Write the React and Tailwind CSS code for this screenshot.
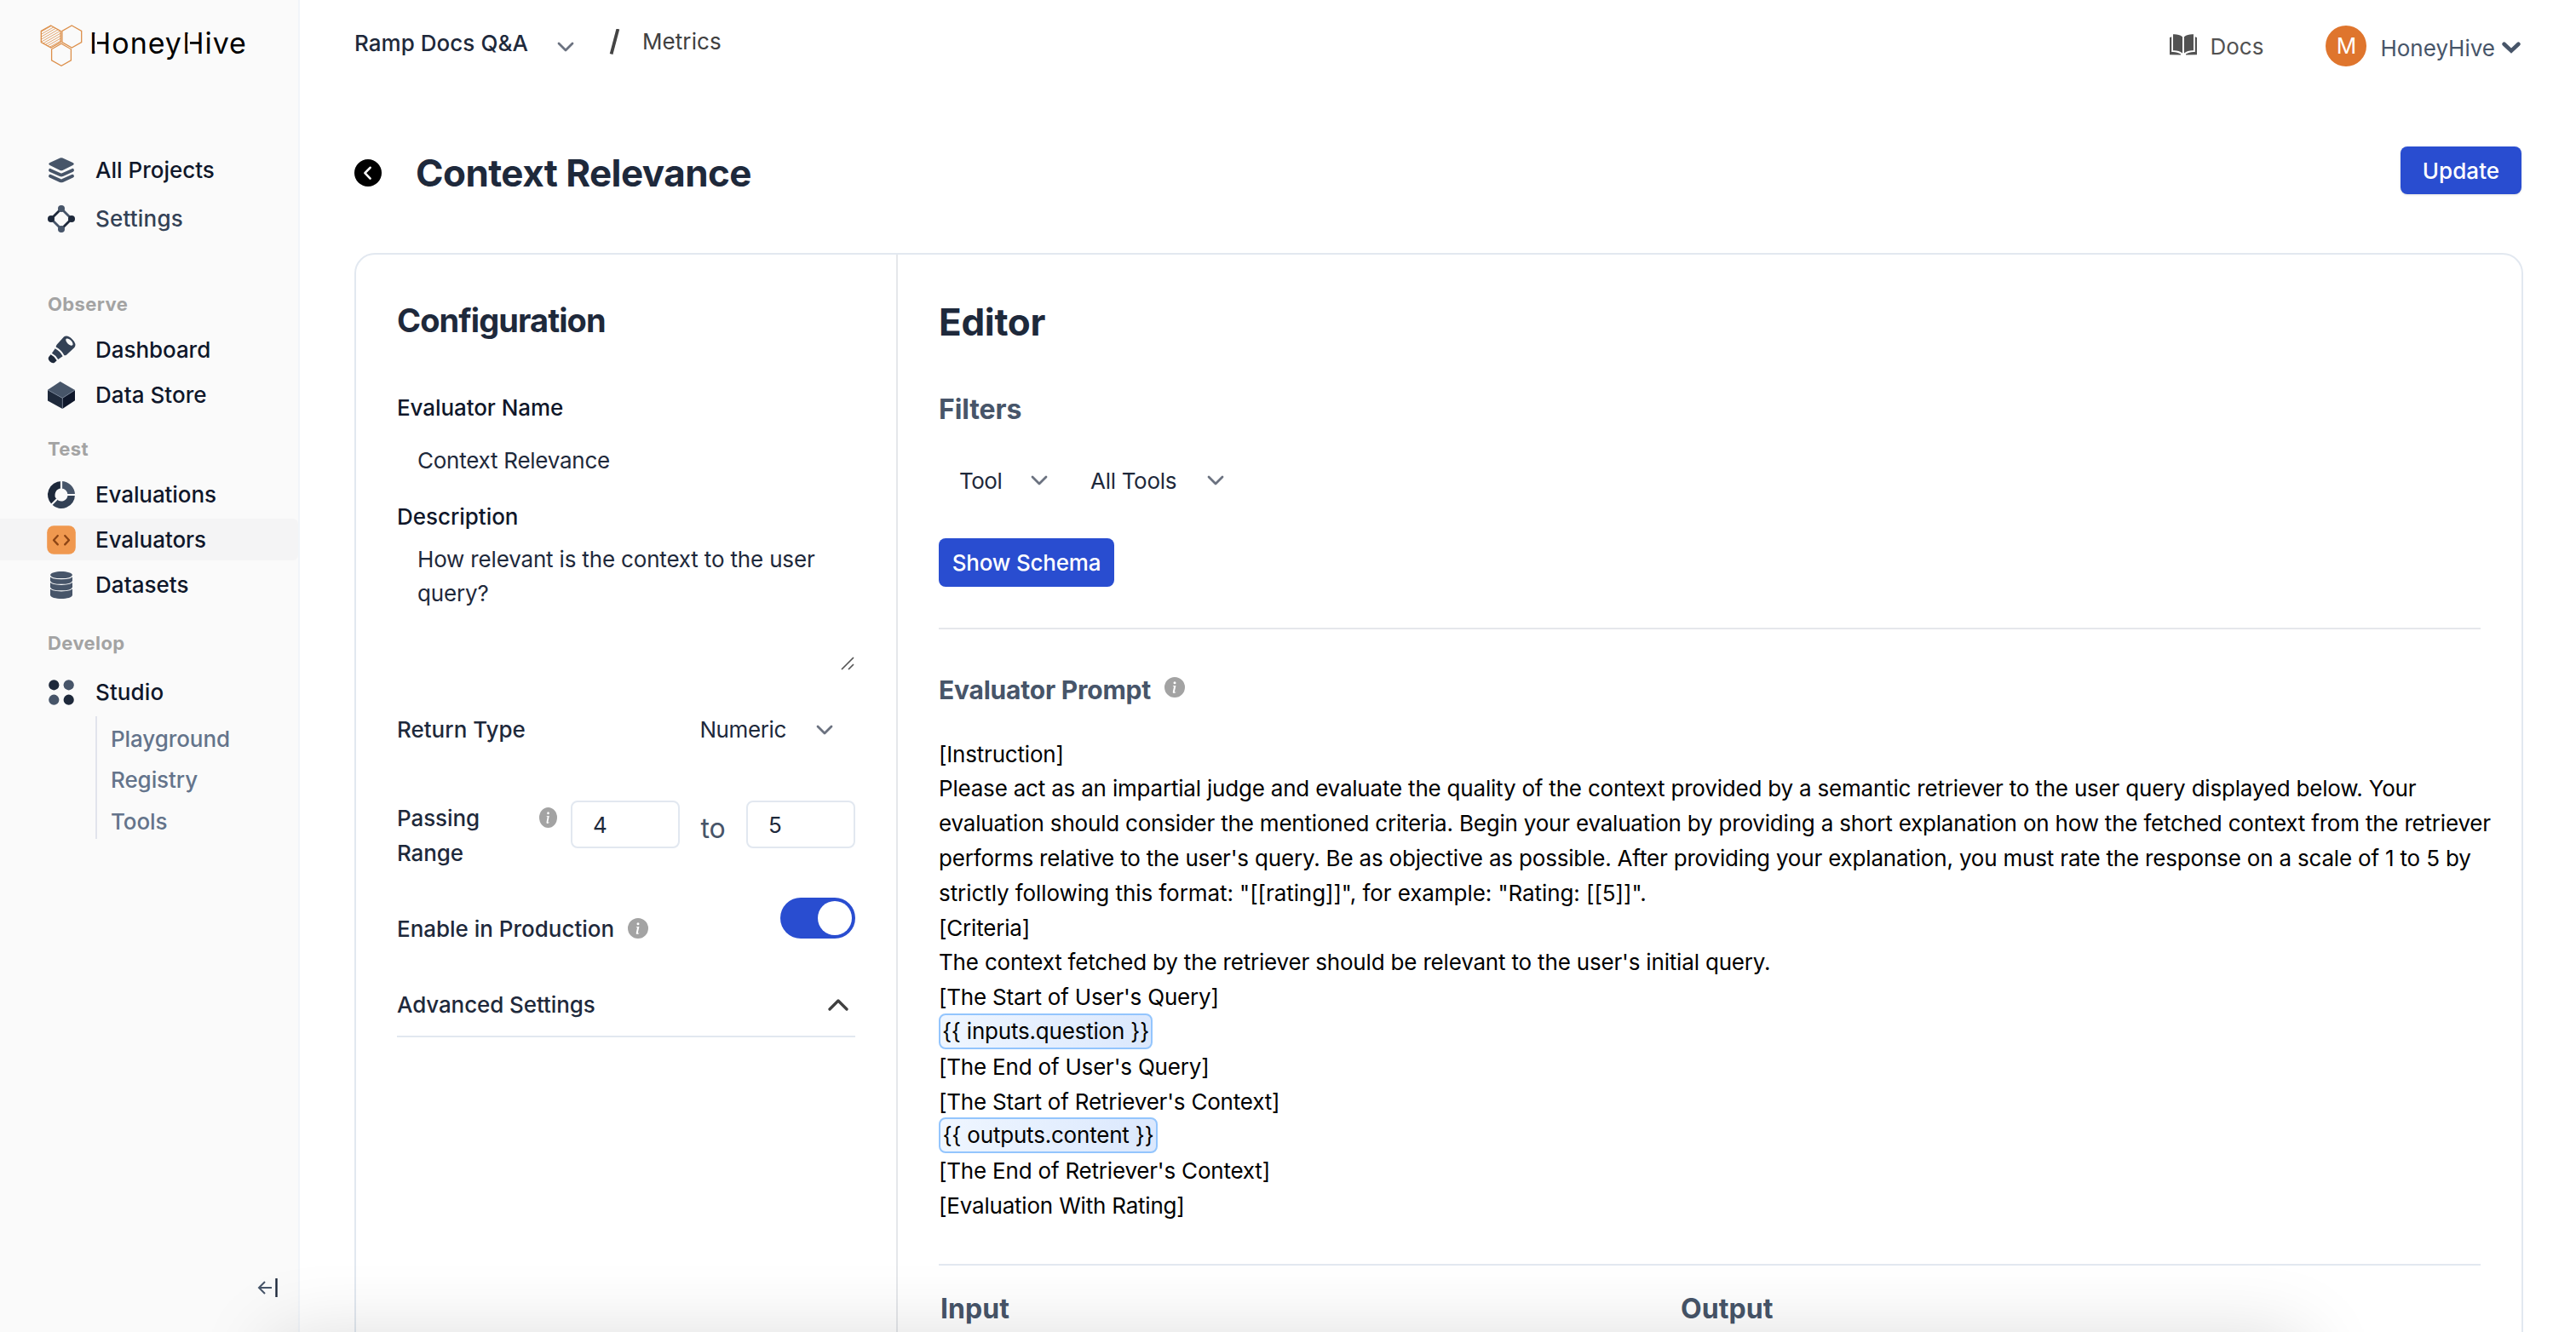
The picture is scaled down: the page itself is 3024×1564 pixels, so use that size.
import React from "react";
import { BsInfoCircleFill } from "react-icons/bs";

const HEX = "0,-13 11.4,-6.5 11.4,6.5 0,13 -11.4,6.5 -11.4,-6.5";

function Logo() {
  return (
    <div className="ml-[47px] mt-[29px] flex h-[50px]">
      <svg width="50" height="50" viewBox="0 0 50 50" fill="none" stroke="#dc8f4a" strokeWidth="1.3">
        <defs>
          <clipPath id="hex-clip">
            <polygon points={HEX} transform="translate(12.7 14)" />
          </clipPath>
        </defs>
        <polygon points={HEX} transform="translate(12.7 14)" />
        <g clipPath="url(#hex-clip)" strokeWidth="0.8">
          <path d="M0 9 14 1M0 12 20 0.5M0 15 24 1M0 18 26 3M0 21 26 6M0 24 26 9M0 27 26 12M4 27.500 26 15M8 28 26 18" />
        </g>
        <polygon points={HEX} transform="translate(37.300 14)" />
        <polygon points={HEX} transform="translate(25 35.300)" />
      </svg>
      <div className="ml-[8px] mt-px whitespace-nowrap text-[34px] leading-[42px] tracking-[0.99px] text-black">
        <LogoH />oney<LogoH />ive
      </div>
    </div>
  );
}

function LogoH() {
  return (
    <span className="relative">
      H
      <span className="absolute left-[6px] top-[10px] h-[20px] w-[3px] bg-[#fafafa]" />
    </span>
  );
}

function Icon({ children }) {
  return (
    <svg width="32" height="32" viewBox="0 0 32 32" fill="none" className="shrink-0 overflow-visible">
      {children}
    </svg>
  );
}

const LayersIcon = () => (
  <Icon>
    <path d="M14.500 1.600Q16 .9 17.500 1.600L29.500 7Q32 8.500 29.500 10L17.500 15.900Q16 16.600 14.500 15.900L2.500 10Q0 8.500 2.500 7Z" fill="#475569" />
    <path d="M3 15.900 14.800 21.300Q16 21.800 17.200 21.300L29 15.900M3 22.700 14.800 28.100Q16 28.600 17.200 28.100L29 22.700" stroke="#475569" strokeWidth="3.900" strokeLinecap="round" />
  </Icon>
);
const SettingsIcon = () => (
  <Icon>
    <g strokeWidth="2.800">
      <path d="M16 4 4 16" stroke="#1e293b" />
      <path d="M28 16 16 28" stroke="#1e293b" />
      <path d="M16 4 28 16" stroke="#475569" />
      <path d="M4 16 16 28" stroke="#475569" />
    </g>
    <circle cx="16" cy="4" r="4" fill="#475569" />
    <circle cx="16" cy="28" r="4" fill="#475569" />
    <circle cx="4" cy="16" r="4" fill="#1e293b" />
    <circle cx="28" cy="16" r="4" fill="#1e293b" />
  </Icon>
);
const TelescopeIcon = () => (
  <Icon>
    <g transform="translate(16 16) rotate(-45)">
      <path d="M-12.500-5Q-10.800 0-12.500 5L-16 4.800Q-19 4-19 0T-16-4.800Z" fill="#1e293b" />
      <path d="M-10.500-5.200-4-6.300Q-2 0-4 6.300L-10.500 5.200Q-8.800 0-10.500-5.200Z" fill="#334155" />
      <path d="M-2-6.800Q-1.500-8 1-8.300L13-8.800Q18-8 18 0T13 8.800L1 8.300Q-1.500 8-2 6.800Q0 0-2-6.800Z" fill="#334155" />
      <ellipse cx="13.300" cy="0" rx="2.600" ry="5.300" fill="#fafafa" />
    </g>
  </Icon>
);
const CubeIcon = () => (
  <Icon>
    <path d="M14.700 0 32 10 17.300 19.400 0 9.800Z" fill="#475569" />
    <path d="M0 9.800 17.300 19.400V32L0 22.600Z" fill="#1e293b" />
    <path d="M32 10 17.300 19.400V32L32 22.300Z" fill="#0f172a" />
    <path d="M0 9.800 17.300 19.400V32M17.300 19.400 32 10" stroke="#94a3b8" strokeWidth="0.500" />
  </Icon>
);
const DonutIcon = () => (
  <Icon>
    <g strokeWidth="8.500">
      <path d="M16 4.250A11.750 11.750 0 0 1 27.750 16" stroke="#475569" />
      <path d="M27.750 16A11.750 11.750 0 0 1 7.700 24.300" stroke="#334155" />
      <path d="M7.700 24.300A11.750 11.750 0 0 1 16 4.250" stroke="#1e293b" />
    </g>
    <path d="M16 9V-1M23 16H33M11 21 3.500 28.500" stroke="#fafafa" strokeWidth="2.200" />
  </Icon>
);
const CodeIcon = () => (
  <Icon>
    <rect x="-0.800" y="-0.800" width="33.600" height="33.600" rx="8" fill="#f0984f" />
    <path d="M11.800 11 7 16.200 11.800 21.400M20.200 11 25 16.200 20.200 21.400" stroke="#8c4415" strokeWidth="2.300" strokeLinecap="round" strokeLinejoin="round" />
  </Icon>
);
const DatabaseIcon = () => (
  <Icon>
    <path d="M3 4.500C3-1.500 29-1.500 29 4.500V27.500C29 33.500 3 33.500 3 27.500Z" fill="#475569" />
    <path d="M3 4.800C4 10 28 10 29 4.800M3 11.500C4 16.700 28 16.700 29 11.500M3 19C4 24.200 28 24.200 29 19" stroke="#fafafa" strokeWidth="1.200" />
  </Icon>
);
const DotsIcon = () => (
  <Icon>
    <circle cx="7.300" cy="7.300" r="6.100" fill="#1e293b" />
    <circle cx="24.700" cy="7.300" r="6.100" fill="#475569" />
    <circle cx="7.300" cy="24.700" r="6.100" fill="#475569" />
    <circle cx="24.700" cy="24.700" r="6.100" fill="#1e293b" />
  </Icon>
);

function NavItem({ icon, label, active, className = "" }) {
  return (
    <div className={"flex h-[49px] items-center gap-6 rounded-r-md pl-14 text-[26px] font-medium " + (active ? "bg-[#f4f4f5] " : "") + (className || "tracking-[-0.05px] text-[#0f172a]")}>
      {icon}
      <span className="leading-[49px]">{label}</span>
    </div>
  );
}

function SectionLabel({ children, className }) {
  return (
    <div className={"pl-14 text-[22px] font-[650] leading-8 tracking-[0.4px] text-[#a3a3a3] " + className}>{children}</div>
  );
}

function Sidebar() {
  return (
    <aside className="flex w-[352px] shrink-0 flex-col border-r-2 border-[#f1f5f9] bg-[#fafafa]">
      <Logo />
      <nav className="mt-[96px] flex flex-col">
        <NavItem icon={<LayersIcon />} label="All Projects" className="tracking-[0px] text-[#0f172a]" />
        <NavItem icon={<SettingsIcon />} label="Settings" className="mt-2 tracking-[0.2px] text-[#334155]" />

        <SectionLabel className="mt-[60px]">Observe</SectionLabel>
        <div className="mt-[13px] flex flex-col gap-1">
          <NavItem icon={<TelescopeIcon />} label="Dashboard" />
          <NavItem icon={<CubeIcon />} label="Data Store" className="tracking-[0.05px] text-[#0f172a]" />
        </div>

        <SectionLabel className="mt-[23px]">Test</SectionLabel>
        <div className="mt-[13px] flex flex-col gap-1">
          <NavItem icon={<DonutIcon />} label="Evaluations" className="tracking-[-0.1px] text-[#0f172a]" />
          <NavItem icon={<CodeIcon />} label="Evaluators" active />
          <NavItem icon={<DatabaseIcon />} label="Datasets" className="tracking-[0.05px] text-[#0f172a]" />
        </div>

        <SectionLabel className="mt-[28px]">Develop</SectionLabel>
        <div className="mt-[17px]">
          <NavItem icon={<DotsIcon />} label="Studio" className="tracking-[0.1px] text-[#0f172a]" />
        </div>
        <div className="ml-[112px] mt-1 border-l-2 border-[#e2e4ec] pl-4 text-[26px] font-medium leading-[43px] tracking-[-0.08px] text-[#64748b]">
          <div className="h-12 pt-[5px]">Playground</div>
          <div className="h-12 pt-[5px]">Registry</div>
          <div className="h-12 pt-[6px]">Tools</div>
        </div>
      </nav>
      <div className="mb-[41px] mr-[24px] mt-auto flex justify-end">
        <svg width="24" height="22" viewBox="0 0 24 22" fill="none">
          <path d="M17 11H2.500M9 4 2 11 9 18" stroke="#475569" strokeWidth="2" />
          <path d="M22.500 0V22" stroke="#1e293b" strokeWidth="2.400" />
        </svg>
      </div>
    </aside>
  );
}

function Chevron({ className = "" }) {
  return (
    <svg width="20" height="12" viewBox="0 0 20 12" fill="none" stroke="#6b7280" strokeWidth="2.800" strokeLinecap="round" strokeLinejoin="round" className={"shrink-0 " + className}>
      <path d="M2 2 10 10 18 2" />
    </svg>
  );
}

function Header() {
  return (
    <header className="flex h-[172px] shrink-0 items-start whitespace-nowrap text-[26px] leading-10">
      <div className="mt-[31px] font-medium tracking-[0.04px] text-[#1e293b]">Ramp Docs Q&amp;A</div>
      <Chevron className="ml-[34px] mt-[49px]" />
      <svg width="14" height="30" viewBox="0 0 14 30" className="ml-[41px] mt-[34px]" stroke="#444444" strokeWidth="3.800">
        <path d="M2.600 29.500 10.400 0" />
      </svg>
      <div className="ml-[25px] mt-[29px] tracking-[0.1px] text-[#404040]">Metrics</div>

      <svg width="32" height="25" viewBox="0 0 32 25" className="ml-auto mt-10" fill="#525252">
        <path d="M4 0.300C8 0 12 .8 15 3.200V22.500C12 20 8 19 4 19.300Z" />
        <path d="M28 .3C24 0 20 .8 17 3.200V22.500C20 20 24 19 28 19.300Z" />
        <path d="M0 4 2.200 3.300V21C6 20.600 10 21.300 13 23.600V24.500L0 24.300Z" />
        <path d="M32 4 29.800 3.300V21C26 20.600 22 21.300 19 23.600V24.500L32 24.300Z" />
      </svg>
      <div className="ml-[16px] mt-[35px] text-[#525252]">Docs</div>
      <div className="ml-[73px] mt-[30px] flex size-12 items-center justify-center rounded-full bg-[#df752d] text-white">M</div>
      <div className="ml-4 mt-[37px] text-[#475569]">HoneyHive</div>
      <svg width="22" height="14" viewBox="0 0 22 14" fill="none" stroke="#475569" strokeWidth="4.600" className="ml-[8px] mr-px mt-[49px]" strokeLinecap="round">
        <path d="M2.600 2.800 11 10.600 19.400 2.800" strokeLinejoin="miter" />
      </svg>
    </header>
  );
}

function Configuration() {
  return (
    <section className="w-[636px] shrink-0 border-r-2 border-[#e5e7eb] px-12 text-[26px] leading-10 text-[#1e293b]">
      <h2 className="mt-[53px] text-[38px] font-[650] leading-[48px] tracking-[-0.92px]">Configuration</h2>
      <div className="mt-[59px] font-medium tracking-[-0.08px] text-[#0f172a]">Evaluator Name</div>
      <div className="mt-[14px] h-14 pl-6 leading-[56px] tracking-[-0.25px]">Context Relevance</div>
      <div className="mt-[18px] font-medium tracking-[-0.03px] text-[#0f172a]">Description</div>
      <div className="relative mt-[10px] h-[153px] pl-6 tracking-[-0.17px]">
        How relevant is the context to the user
        <br />
        query?
        <svg width="16" height="16" viewBox="0 0 16 16" stroke="#555555" strokeWidth="1.700" className="absolute bottom-[3px] right-[1px]">
          <path d="M1 15 15 1M9 15 15 9" />
        </svg>
      </div>
      <div className="mt-[38px] flex h-[57px] items-center">
        <span className="font-medium">Return Type</span>
        <span className="ml-auto tracking-[-0.38px]">Numeric</span>
        <Chevron className="ml-[35px] mr-[26px]" />
      </div>
      <div className="mt-[55px] flex h-[82px] items-start">
        <span className="w-[167px] font-medium leading-[41px] tracking-[-0.1px]">
          Passing
          <br />
          Range
        </span>
        <BsInfoCircleFill preserveAspectRatio="none" className="mt-2 h-6 w-[21px] shrink-0 text-[#a3a3a3]" />
        <div className="ml-4 h-14 w-32 shrink-0 rounded-lg border-2 border-[#e2e8f0] pl-[24px] leading-[53px]">4</div>
        <span className="mt-[13px] w-[78px] shrink-0 text-center text-[32px] tracking-[-0.15px] text-[#475569]">to</span>
        <div className="h-14 w-32 shrink-0 rounded-lg border-2 border-[#e2e8f0] pl-[24px] leading-[53px]">5</div>
      </div>
      <div className="mt-8 flex h-12 items-start">
        <span className="mt-4 w-[255px] whitespace-nowrap font-medium leading-[41px] tracking-[-0.02px]">Enable in Production</span>
        <BsInfoCircleFill className="ml-4 mt-6 size-6 text-[#a3a3a3]" />
        <div className="ml-auto flex h-12 w-[88px] items-center justify-end rounded-full bg-[#294dd0] pr-1">
          <div className="size-10 rounded-full bg-white" />
        </div>
      </div>
      <div className="mt-[53px] flex h-[63px] items-center border-b-2 border-[#e2e8f0] pb-3">
        <span className="font-medium tracking-[-0.1px]">Advanced Settings</span>
        <svg width="24" height="14" viewBox="0 0 24 14" fill="none" stroke="#404040" strokeWidth="3.300" strokeLinecap="round" strokeLinejoin="round" className="ml-auto mr-2">
          <path d="M2 12 12 2 22 12" />
        </svg>
      </div>
    </section>
  );
}

const Tag = ({ children, className }) => (
  <span className={"-mt-[2px] flex h-[42px] items-center justify-center rounded-lg border-2 border-[#93c5fd] bg-linear-to-r from-[#eff6ff] to-[#dbe8fd] pt-px " + className}>{children}</span>
);

const PROMPT = [
  "[Instruction]",
  "Please act as an impartial judge and evaluate the quality of the context provided by a semantic retriever to the user query displayed below. Your",
  "evaluation should consider the mentioned criteria. Begin your evaluation by providing a short explanation on how the fetched context from the retriever",
  <span className="tracking-[-0.185px]">performs relative to the user's query. Be as objective as possible. After providing your explanation, you must rate the response on a scale of 1 to 5 by</span>,
  <span className="tracking-[-0.07px]">strictly following this format: "[[rating]]", for example: "Rating: [[5]]".</span>,
  "[Criteria]",
  <span className="tracking-[-0.18px]">The context fetched by the retriever should be relevant to the user's initial query.</span>,
  "[The Start of User's Query]",
  <Tag className="w-[251px]">{"{{ inputs.question }}"}</Tag>,
  "[The End of User's Query]",
  "[The Start of Retriever's Context]",
  <Tag className="w-[257px]">{"{{ outputs.content }}"}</Tag>,
  "[The End of Retriever's Context]",
  "[Evaluation With Rating]",
];

function Editor() {
  return (
    <section className="min-w-0 flex-1 px-12 text-[26px] text-[#1e293b]">
      <h2 className="mt-[51px] text-[44px] font-[650] leading-[56px] tracking-[-0.3px]">Editor</h2>
      <h3 className="mt-[55px] text-[32px] font-[650] leading-10 tracking-[-0.1px] text-[#475569]">Filters</h3>
      <div className="mt-[35px] flex h-14 items-center pl-6">
        <span className="w-[84px] tracking-[-0.5px]">Tool</span>
        <Chevron />
        <span className="ml-[50px] w-[137px] tracking-[-0.3px]">All Tools</span>
        <Chevron />
      </div>
      <button className="mt-10 block h-[57px] w-[206px] rounded-lg bg-[#294dd0] text-center font-medium leading-[57px] tracking-[-0.2px] text-white">Show Schema</button>
      <div className="mt-12 h-[2px] bg-[#e5e7eb]" />
      <div className="mt-[51px] flex h-10 items-center">
        <h3 className="w-[249px] whitespace-nowrap text-[30px] font-[650] leading-10 tracking-[-0.22px] text-[#475569]">Evaluator Prompt</h3>
        <BsInfoCircleFill className="-mt-1.5 ml-4 size-6 text-[#a3a3a3]" />
      </div>
      <div className="mt-[35.600px] h-[571.400px] whitespace-nowrap leading-[40.8px] tracking-[-0.2px] text-black">
        {PROMPT.map((line, i) => (
          <div key={i} className="flex h-[40.8px] items-start">{line}</div>
        ))}
      </div>
      <div className="mt-[47px] h-[2px] bg-[#e2e8f0]" />
      <div className="mt-[31px] flex pl-[2px] text-[32px] font-[650] leading-10 tracking-[0.05px] text-[#475569]">
        <div className="w-[869px]">Input</div>
        <div>Output</div>
      </div>
    </section>
  );
}

export default function App() {
  return (
    <div className="relative flex h-[1564px] w-[3024px] overflow-hidden bg-white font-[Inter,'Liberation_Sans',sans-serif]">
      <Sidebar />
      <main className="flex min-w-0 flex-1 flex-col px-16">
        <Header />
        <div className="flex h-14 shrink-0 items-center">
          <svg width="32" height="32" viewBox="0 0 32 32" className="mt-1.5">
            <circle cx="16" cy="16" r="16" fill="#000000" />
            <path d="M18.600 9.800 12.400 16.200 18.600 22.600" fill="none" stroke="#ffffff" strokeWidth="2.600" strokeLinecap="round" strokeLinejoin="round" />
          </svg>
          <h1 className="ml-10 mt-1.5 text-[44px] font-[650] leading-[56px] tracking-[-0.56px] text-[#1e293b]">Context Relevance</h1>
          <button className="ml-auto h-14 w-[142px] rounded-lg bg-[#294dd0] pt-px text-[26px] font-medium leading-[55px] tracking-[0.05px] text-white shadow-sm">Update</button>
        </div>
        <div className="-mr-[2px] mt-[69px] flex h-[1400px] shrink-0 rounded-3xl border-2 border-[#e2e8f0]">
          <Configuration />
          <Editor />
        </div>
      </main>
      <div className="pointer-events-none absolute left-[320px] top-[1570px] h-[200px] w-[2384px] shadow-[0_0_90px_rgba(0,0,0,0.15)]" />
    </div>
  );
}
